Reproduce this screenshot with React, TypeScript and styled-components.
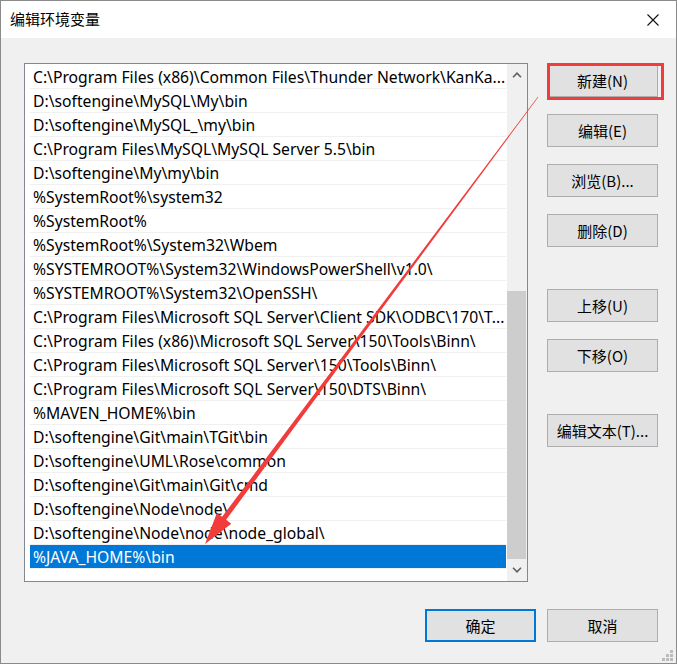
import React from 'react';
import styled, { createGlobalStyle } from 'styled-components';

const GlobalStyle = createGlobalStyle`
  html, body {
    margin: 0;
    padding: 0;
    background: #ffffff;
  }
  * {
    box-sizing: border-box;
  }
`;

const paths = [
  'C:\\Program Files (x86)\\Common Files\\Thunder Network\\KanKa...',
  'D:\\softengine\\MySQL\\My\\bin',
  'D:\\softengine\\MySQL_\\my\\bin',
  'C:\\Program Files\\MySQL\\MySQL Server 5.5\\bin',
  'D:\\softengine\\My\\my\\bin',
  '%SystemRoot%\\system32',
  '%SystemRoot%',
  '%SystemRoot%\\System32\\Wbem',
  '%SYSTEMROOT%\\System32\\WindowsPowerShell\\v1.0\\',
  '%SYSTEMROOT%\\System32\\OpenSSH\\',
  'C:\\Program Files\\Microsoft SQL Server\\Client SDK\\ODBC\\170\\T...',
  'C:\\Program Files (x86)\\Microsoft SQL Server\\150\\Tools\\Binn\\',
  'C:\\Program Files\\Microsoft SQL Server\\150\\Tools\\Binn\\',
  'C:\\Program Files\\Microsoft SQL Server\\150\\DTS\\Binn\\',
  '%MAVEN_HOME%\\bin',
  'D:\\softengine\\Git\\main\\TGit\\bin',
  'D:\\softengine\\UML\\Rose\\common',
  'D:\\softengine\\Git\\main\\Git\\cmd',
  'D:\\softengine\\Node\\node\\',
  'D:\\softengine\\Node\\node\\node_global\\',
  '%JAVA_HOME%\\bin',
];

const selectedIndex = 20;

const App = () => {
  return (
    <>
      <GlobalStyle />
      <Window>
        <TitleBar>
          <Title>编辑环境变量</Title>
          <CloseButton>
            <svg width="12" height="12" viewBox="0 0 12 12">
              <path d="M0.5 0.5 L11.5 11.5 M11.5 0.5 L0.5 11.5" stroke="#111" strokeWidth="1.1" />
            </svg>
          </CloseButton>
        </TitleBar>
        <Body>
          <ListBox>
            <Rows>
              {paths.map((p, i) => (
                <Row key={i} $selected={i === selectedIndex}>
                  {p}
                </Row>
              ))}
            </Rows>
            <ScrollBar>
              <ScrollArrow>
                <svg width="10" height="6" viewBox="0 0 10 6">
                  <polyline points="1,5.2 5,1.2 9,5.2" fill="none" stroke="#606060" strokeWidth="1.6" />
                </svg>
              </ScrollArrow>
              <Track>
                <Thumb />
              </Track>
              <ScrollArrow>
                <svg width="10" height="6" viewBox="0 0 10 6">
                  <polyline points="1,0.8 5,4.8 9,0.8" fill="none" stroke="#606060" strokeWidth="1.6" />
                </svg>
              </ScrollArrow>
            </ScrollBar>
          </ListBox>
          <SideButtons>
            <ButtonGroup>
              <Button>新建(N)</Button>
              <Button>编辑(E)</Button>
              <Button>浏览(B)...</Button>
              <Button>删除(D)</Button>
            </ButtonGroup>
            <ButtonGroup>
              <Button>上移(U)</Button>
              <Button>下移(O)</Button>
            </ButtonGroup>
            <ButtonGroup>
              <Button>编辑文本(T)...</Button>
            </ButtonGroup>
          </SideButtons>
        </Body>
        <Footer>
          <Button $default>确定</Button>
          <Button>取消</Button>
        </Footer>
        <ResizeGrip>
          <svg width="12" height="12" viewBox="0 0 12 12">
            <rect x="8" y="0" width="3" height="3" fill="#bcbcbc" />
            <rect x="4" y="4" width="3" height="3" fill="#bcbcbc" />
            <rect x="8" y="4" width="3" height="3" fill="#bcbcbc" />
            <rect x="0" y="8" width="3" height="3" fill="#bcbcbc" />
            <rect x="4" y="8" width="3" height="3" fill="#bcbcbc" />
            <rect x="8" y="8" width="3" height="3" fill="#bcbcbc" />
          </svg>
        </ResizeGrip>
        <Highlight />
        <Annotation width="677" height="664" viewBox="0 0 677 664">
          <polygon
            points="538.2,97.2 226.1,519.8 231.3,523.7 205,544 216.9,512.9 222.1,516.8 537.8,96.8"
            fill="#f23b3b"
          />
        </Annotation>
      </Window>
    </>
  );
};

export default App;

const Window = styled.div`
  position: relative;
  width: 677px;
  height: 664px;
  display: flex;
  flex-direction: column;
  background: #f0f0f0;
  border: 1px solid #8a8a8a;
  overflow: hidden;
  font-family: 'Noto Sans', 'Noto Sans CJK SC', sans-serif;
`;

const TitleBar = styled.div`
  height: 37px;
  flex: none;
  display: flex;
  align-items: center;
  justify-content: space-between;
  background: #ffffff;
  padding-left: 9px;
`;

const Title = styled.span`
  font-family: 'Noto Sans CJK SC', sans-serif;
  font-size: 15px;
  color: #000;
  margin-top: -2px;
`;

const CloseButton = styled.div`
  width: 46px;
  height: 37px;
  display: flex;
  align-items: center;
  justify-content: center;
`;

const Body = styled.div`
  display: flex;
  gap: 19px;
  padding: 25px 18px 0 23px;
`;

const ListBox = styled.div`
  width: 504px;
  height: 519px;
  flex: none;
  display: flex;
  background: #ffffff;
  border: 1px solid #828790;
  padding-left: 5px;
`;

const Rows = styled.div`
  width: 476px;
  margin-right: 1px;
  padding-top: 1px;
  display: flex;
  flex-direction: column;
`;

const Row = styled.div<{ $selected?: boolean }>`
  height: 24px;
  flex: none;
  padding-left: 3px;
  line-height: 24px;
  font-size: 15.7px;
  white-space: nowrap;
  overflow: hidden;
  color: ${({ $selected }) => ($selected ? '#ffffff' : '#000000')};
  background: ${({ $selected }) => ($selected ? '#0078d7' : 'transparent')};
  border-bottom: 1px solid #f0f0f0;
  background-clip: ${({ $selected }) => ($selected ? 'padding-box' : 'border-box')};
`;

const ScrollBar = styled.div`
  width: 20px;
  display: flex;
  flex-direction: column;
  background: #f0f0f0;
`;

const ScrollArrow = styled.div`
  height: 22px;
  flex: none;
  display: flex;
  align-items: center;
  justify-content: center;
`;

const Track = styled.div`
  flex: 1;
  display: flex;
  flex-direction: column;
  justify-content: flex-end;
`;

const Thumb = styled.div`
  height: 268px;
  margin-right: 1px;
  background: #cdcdcd;
`;

const SideButtons = styled.div`
  display: flex;
  flex-direction: column;
  gap: 42px;
  padding-top: 1px;
`;

const ButtonGroup = styled.div`
  display: flex;
  flex-direction: column;
  gap: 17px;
`;

const Button = styled.div<{ $default?: boolean }>`
  width: 111px;
  height: 33px;
  display: flex;
  align-items: center;
  justify-content: center;
  background: #e1e1e1;
  border: ${({ $default }) => ($default ? '2px solid #0078d7' : '1px solid #adadad')};
  font-family: 'Noto Sans CJK SC', sans-serif;
  font-size: 15px;
  color: #000;
`;

const Footer = styled.div`
  display: flex;
  justify-content: flex-end;
  gap: 11px;
  padding: 27px 18px 0 0;
`;

const ResizeGrip = styled.div`
  position: absolute;
  right: 2px;
  bottom: 1px;
  width: 12px;
  height: 12px;
  display: flex;
`;

const Highlight = styled.div`
  position: absolute;
  left: 546px;
  top: 62px;
  width: 117px;
  height: 37px;
  border: 3px solid #f23b3b;
  pointer-events: none;
`;

const Annotation = styled.svg`
  position: absolute;
  left: -1px;
  top: -1px;
  pointer-events: none;
`;
